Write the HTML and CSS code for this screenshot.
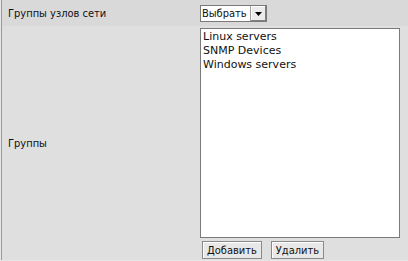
FILE: index.html
```html
<!DOCTYPE html>
<html lang="ru">
<head>
    <meta charset="UTF-8">
    <title>Группы узлов сети</title>
    <link rel="stylesheet" href="styles.css">
</head>
<body>
    <div class="form">
        <table class="props">
            <tr class="row-top">
                <td class="label">Группы узлов сети</td>
                <td class="field">
                    <div class="picker">
                        <span class="picker-text">Выбрать</span>
                        <span class="picker-arrow">
                            <svg width="7" height="4" viewBox="0 0 7 4"><path d="M0 0h7L3.5 4z" fill="#000"/></svg>
                        </span>
                    </div>
                </td>
            </tr>
            <tr class="row-groups">
                <td class="label">Группы</td>
                <td class="field">
                    <div class="listbox">
                        <div class="item">Linux servers</div>
                        <div class="item">SNMP Devices</div>
                        <div class="item">Windows servers</div>
                    </div>
                    <div class="actions">
                        <button class="btn">Добавить</button>
                        <button class="btn">Удалить</button>
                    </div>
                </td>
            </tr>
        </table>
    </div>
</body>
</html>
```

FILE: styles.css
```css
body {
    margin: 0;
    background: #e6e6e6;
    font-family: "DejaVu Sans", Verdana, sans-serif;
    font-size: 11px;
    color: #111;
}

.form {
    padding-left: 1px;
}

.props {
    width: 407px;
    border-collapse: collapse;
    border-left: 1px solid #9a9a9a;
}

.props td {
    padding: 0;
    vertical-align: middle;
}

.row-top td {
    background: #d9d9d9;
    height: 25px;
}

.row-groups td {
    background: #dfdfdf;
}

.label {
    width: 192px;
    padding-left: 6px !important;
    font-family: "DejaVu Sans Condensed", "DejaVu Sans", sans-serif;
}

.row-top .field {
    padding-top: 1px !important;
}

.row-groups .field {
    padding: 2px 0 1px 0 !important;
}

.picker {
    display: inline-flex;
    align-items: stretch;
    height: 15px;
    border: 1px solid #7a7a7a;
    background: #fff;
    font-family: "DejaVu Sans Condensed", "DejaVu Sans", sans-serif;
}

.picker-text {
    padding: 0 3px 0 1px;
    line-height: 15px;
}

.picker-arrow {
    width: 15px;
    background: #ececec;
    border-left: 1px solid #a0a0a0;
    box-shadow: inset -1px -1px #808080, inset 1px 1px #fff;
    display: flex;
    align-items: center;
    justify-content: center;
}

.listbox {
    width: 196px;
    height: 206px;
    background: #fff;
    border: 1px solid #7a7a7a;
    padding: 1px 1px;
}

.item {
    line-height: 14px;
    padding-left: 1px;
}

.actions {
    display: flex;
    gap: 9px;
    margin-top: 3px;
    padding-left: 2px;
}

.btn {
    font: inherit;
    font-family: "DejaVu Sans Condensed", "DejaVu Sans", sans-serif;
    color: inherit;
    height: 18px;
    padding: 0 4px;
    background: #e8e8e8;
    border: 1px solid #8a8a8a;
    box-shadow: inset 1px 1px #fff;
    border-radius: 0;
}
```
